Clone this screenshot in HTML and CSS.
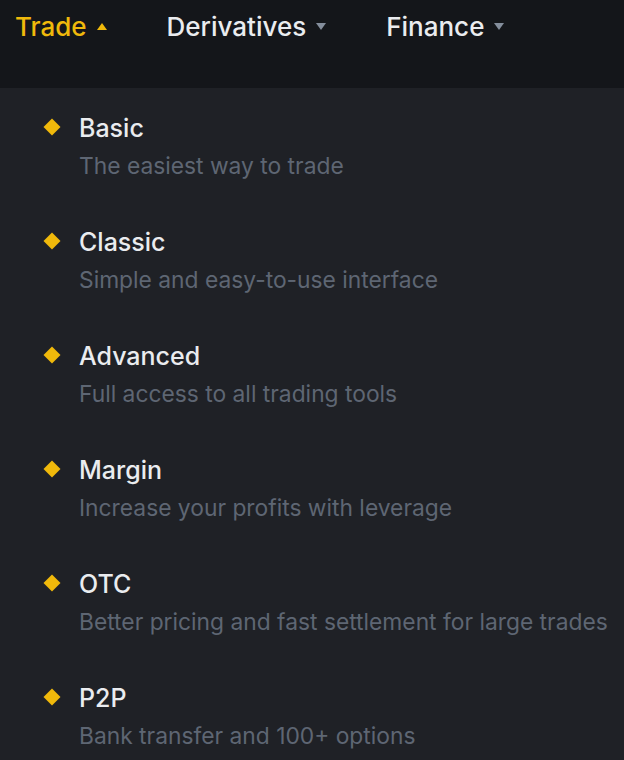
FILE: index.html
```html
<!DOCTYPE html>
<html>
<head>
<meta charset="utf-8">
<link rel="stylesheet" href="styles.css">
</head>
<body>
<header class="topbar">
  <nav class="nav">
    <div class="nav-item active">Trade <span class="caret up"></span></div>
    <div class="nav-item">Derivatives <span class="caret"></span></div>
    <div class="nav-item">Finance <span class="caret"></span></div>
  </nav>
</header>
<main class="panel">
  <ul class="menu">
    <li class="entry"><span class="dot"></span><div class="text"><div class="title">Basic</div><div class="desc">The easiest way to trade</div></div></li>
    <li class="entry"><span class="dot"></span><div class="text"><div class="title">Classic</div><div class="desc">Simple and easy-to-use interface</div></div></li>
    <li class="entry"><span class="dot"></span><div class="text"><div class="title">Advanced</div><div class="desc">Full access to all trading tools</div></div></li>
    <li class="entry"><span class="dot"></span><div class="text"><div class="title">Margin</div><div class="desc">Increase your profits with leverage</div></div></li>
    <li class="entry"><span class="dot"></span><div class="text"><div class="title">OTC</div><div class="desc">Better pricing and fast settlement for large trades</div></div></li>
    <li class="entry"><span class="dot"></span><div class="text"><div class="title">P2P</div><div class="desc">Bank transfer and 100+ options</div></div></li>
  </ul>
</main>
</body>
</html>
```
FILE: styles.css
```css
html, body {
  margin: 0;
  padding: 0;
  background: #1f2126;
  font-family: Inter, "Noto Sans", sans-serif;
  overflow: hidden;
}
.topbar {
  height: 88px;
  background: #14161a;
}
.nav {
  display: flex;
  align-items: center;
  height: 52px;
  padding-left: 15px;
  gap: 60px;
}
.nav-item {
  display: flex;
  align-items: center;
  gap: 10px;
  color: #eaecef;
  font-size: 26px;
  font-weight: 500;
}
.nav-item.active { color: #f0b90b; }
.caret {
  width: 0;
  height: 0;
  border-left: 5.5px solid transparent;
  border-right: 5.5px solid transparent;
  border-top: 7px solid #848e9c;
}
.caret.up {
  border-top: none;
  border-bottom: 7px solid #f0b90b;
}
.menu {
  list-style: none;
  margin: 0;
  padding: 24px 0 0 44px;
}
.entry {
  display: flex;
  align-items: flex-start;
  height: 114px;
}
.dot {
  width: 12px;
  height: 12px;
  background: #f0b90b;
  transform: rotate(45deg);
  margin: 9px 21px 0 2px;
  flex: none;
}
.title {
  color: #eaecef;
  font-size: 25px;
  font-weight: 500;
  line-height: 32px;
}
.desc {
  color: #5e6673;
  font-size: 22.8px;
  line-height: 36px;
  margin-top: 4px;
  white-space: nowrap;
}
```
